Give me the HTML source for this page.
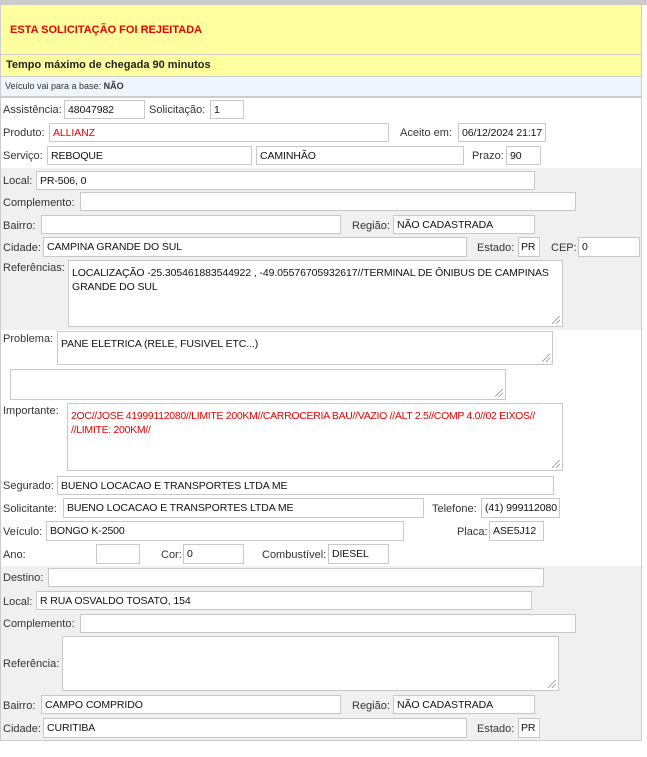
<!DOCTYPE html>
<html><head><meta charset="utf-8"><style>
*{box-sizing:border-box;margin:0;padding:0}
body{width:647px;height:757px;background:#fff;font-family:"Liberation Sans","DejaVu Sans",sans-serif;font-size:11px;color:#333;position:relative;overflow:hidden}
.a{position:absolute}
.l{position:absolute;white-space:nowrap;line-height:13px;margin-top:1px}
.i{position:absolute;background:#fff;border:1px solid #c8c8c8;padding:3px 3px;white-space:nowrap;overflow:hidden;color:#111;line-height:12px;font-size:10.5px;letter-spacing:-0.1px}
.t{position:absolute;background:#fff;border:1px solid #c8c8c8;padding:5px 3px;color:#111;line-height:14px;font-size:10.5px;letter-spacing:-0.1px}
.t::after{content:"";position:absolute;right:2px;bottom:2px;width:8px;height:8px;background:linear-gradient(135deg,transparent 45%,#888 45%,#888 52%,transparent 52%,transparent 70%,#888 70%,#888 77%,transparent 77%)}
.g{position:absolute;left:1px;width:640px;background:#f0f0f0}
.r{color:#e00}
</style></head><body>
<div class="a" style="left:0;top:0;width:647px;height:5px;background:#ccc"></div>
<div class="a" style="left:0;top:5px;width:642px;height:49px;background:#ffff9f;border-left:1px solid #ccc;border-right:1px solid #ccc"></div>
<div class="l" style="left:10px;top:23px;color:#e00;font-weight:bold;font-size:11px">ESTA SOLICITAÇÃO FOI REJEITADA</div>
<div class="a" style="left:0;top:54px;width:642px;height:1px;background:#ccc"></div>
<div class="a" style="left:0;top:55px;width:642px;height:21px;background:#ffff9f;border-left:1px solid #ccc;border-right:1px solid #ccc"></div>
<div class="l" style="left:6px;top:58px;font-weight:bold;font-size:11px;color:#222">Tempo máximo de chegada 90 minutos</div>
<div class="a" style="left:0;top:76px;width:642px;height:1px;background:#ccc"></div>
<div class="a" style="left:0;top:77px;width:642px;height:19px;background:#eef5fd;border-left:1px solid #ccc;border-right:1px solid #ccc"></div>
<div class="l" style="left:5px;top:79px;font-size:9px">Veículo vai para a base: <b>NÃO</b></div>
<div class="a" style="left:0;top:96px;width:642px;height:2px;background:#ccc"></div>
<div class="a" style="left:0;top:98px;width:642px;height:643px;border-left:1px solid #ccc;border-right:1px solid #ccc;border-bottom:1px solid #ccc"></div>
<div class="g" style="top:168px;height:162px"></div>
<div class="g" style="top:566px;height:174px"></div>

<div class="l" style="left:3px;top:103px">Assistência:</div><div class="i" style="left:64px;top:100px;width:81px;height:19px">48047982</div>
<div class="l" style="left:149px;top:103px">Solicitação:</div><div class="i" style="left:210px;top:100px;width:34px;height:19px">1</div>

<div class="l" style="left:3px;top:126px">Produto:</div><div class="i r" style="left:49px;top:123px;width:340px;height:19px;color:#e00">ALLIANZ</div>
<div class="l" style="left:400px;top:126px">Aceito em:</div><div class="i" style="left:458px;top:123px;width:88px;height:19px">06/12/2024 21:17</div>

<div class="l" style="left:3px;top:149px">Serviço:</div><div class="i" style="left:47px;top:146px;width:205px;height:19px">REBOQUE</div>
<div class="i" style="left:256px;top:146px;width:208px;height:19px">CAMINHÃO</div>
<div class="l" style="left:472px;top:149px">Prazo:</div><div class="i" style="left:506px;top:146px;width:35px;height:19px">90</div>

<div class="l" style="left:3px;top:174px">Local:</div><div class="i" style="left:36px;top:171px;width:499px;height:19px">PR-506, 0</div>
<div class="l" style="left:3px;top:196px">Complemento:</div><div class="i" style="left:80px;top:192px;width:496px;height:19px"></div>
<div class="l" style="left:3px;top:219px">Bairro:</div><div class="i" style="left:41px;top:215px;width:300px;height:19px"></div>
<div class="l" style="left:352px;top:219px">Região:</div><div class="i" style="left:393px;top:215px;width:142px;height:19px">NÃO CADASTRADA</div>
<div class="l" style="left:3px;top:241px">Cidade:</div><div class="i" style="left:43px;top:237px;width:424px;height:20px">CAMPINA GRANDE DO SUL</div>
<div class="l" style="left:477px;top:241px">Estado:</div><div class="i" style="left:518px;top:237px;width:22px;height:20px;padding:3px 2px">PR</div>
<div class="l" style="left:551px;top:241px">CEP:</div><div class="i" style="left:578px;top:237px;width:62px;height:20px">0</div>
<div class="l" style="left:3px;top:261px">Referências:</div><div class="t" style="left:68px;top:260px;width:495px;height:67px">LOCALIZAÇÃO -25.305461883544922 , -49.05576705932617//TERMINAL DE ÔNIBUS DE CAMPINAS GRANDE DO SUL</div>

<div class="l" style="left:3px;top:332px">Problema:</div><div class="t" style="left:57px;top:331px;width:496px;height:34px">PANE ELETRICA (RELE, FUSIVEL ETC...)</div>
<div class="t" style="left:10px;top:369px;width:496px;height:31px"></div>
<div class="l" style="left:3px;top:404px">Importante:</div><div class="t" style="left:67px;top:403px;width:496px;height:68px;color:#e00;letter-spacing:-0.3px">2OC//JOSE 41999112080//LIMITE 200KM//CARROCERIA BAU//VAZIO //ALT 2.5//COMP 4.0//02 EIXOS// //LIMITE: 200KM//</div>

<div class="l" style="left:3px;top:479px">Segurado:</div><div class="i" style="left:57px;top:476px;width:497px;height:19px">BUENO LOCACAO E TRANSPORTES LTDA ME</div>
<div class="l" style="left:3px;top:502px">Solicitante:</div><div class="i" style="left:63px;top:498px;width:361px;height:20px">BUENO LOCACAO E TRANSPORTES LTDA ME</div>
<div class="l" style="left:432px;top:502px">Telefone:</div><div class="i" style="left:481px;top:498px;width:79px;height:20px">(41) 999112080</div>
<div class="l" style="left:3px;top:525px">Veículo:</div><div class="i" style="left:46px;top:521px;width:358px;height:20px">BONGO K-2500</div>
<div class="l" style="left:457px;top:525px">Placa:</div><div class="i" style="left:489px;top:521px;width:55px;height:20px">ASE5J12</div>
<div class="l" style="left:3px;top:548px">Ano:</div><div class="i" style="left:96px;top:544px;width:44px;height:20px"></div>
<div class="l" style="left:161px;top:548px">Cor:</div><div class="i" style="left:183px;top:544px;width:61px;height:20px">0</div>
<div class="l" style="left:262px;top:548px">Combustível:</div><div class="i" style="left:328px;top:544px;width:61px;height:20px">DIESEL</div>

<div class="l" style="left:3px;top:571px">Destino:</div><div class="i" style="left:48px;top:568px;width:496px;height:19px"></div>
<div class="l" style="left:3px;top:595px">Local:</div><div class="i" style="left:36px;top:591px;width:496px;height:19px">R RUA OSVALDO TOSATO, 154</div>
<div class="l" style="left:3px;top:617px">Complemento:</div><div class="i" style="left:80px;top:614px;width:496px;height:19px"></div>
<div class="l" style="left:3px;top:657px">Referência:</div><div class="t" style="left:62px;top:636px;width:497px;height:55px"></div>
<div class="l" style="left:3px;top:699px">Bairro:</div><div class="i" style="left:41px;top:695px;width:300px;height:19px">CAMPO COMPRIDO</div>
<div class="l" style="left:352px;top:699px">Região:</div><div class="i" style="left:393px;top:695px;width:142px;height:19px">NÃO CADASTRADA</div>
<div class="l" style="left:3px;top:722px">Cidade:</div><div class="i" style="left:43px;top:718px;width:424px;height:20px">CURITIBA</div>
<div class="l" style="left:477px;top:722px">Estado:</div><div class="i" style="left:518px;top:718px;width:22px;height:20px;padding:3px 2px">PR</div>
</body></html>
